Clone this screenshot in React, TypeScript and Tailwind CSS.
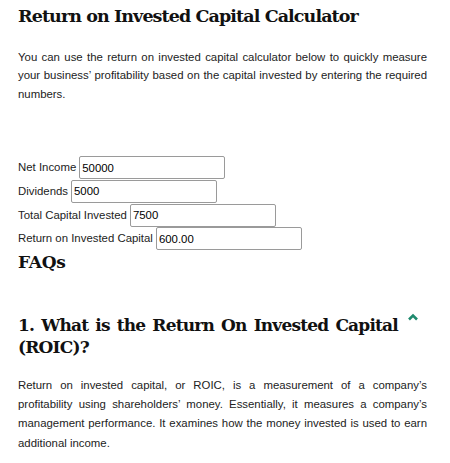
import React from "react";

const sans = { fontFamily: '"Liberation Sans", Arial, sans-serif' };
const serif = { fontFamily: '"DejaVu Serif", serif' };

function Row({ label, value }: { label: string; value: string }) {
  return (
    <div className="flex items-center h-[23.7px]">
      <span className="text-[11.4px] text-[#222]">{label}</span>
      <input
        readOnly
        value={value}
        className="ml-[3px] w-[146px] h-[23px] border border-[#9a9a9a] rounded-[2px] px-[2px] text-[11.4px] text-black bg-white outline-none"
        style={sans}
      />
    </div>
  );
}

export default function App() {
  return (
    <div className="w-[450px] h-[463px] bg-white overflow-hidden pl-[18px] pr-[23px]" style={sans}>
      <h1 className="pt-[2px] text-[17.5px] leading-[28px] font-bold text-[#111] tracking-[-0.9px]" style={serif}>
        Return on Invested Capital Calculator
      </h1>
      <p className="mt-[18px] text-[11.4px] leading-[18.3px] text-[#222] text-justify">
        You can use the return on invested capital calculator below to quickly measure your business’ profitability based on the capital invested by entering the required numbers.
      </p>
      <div className="mt-[53px] flex flex-col">
        <Row label="Net Income" value="50000" />
        <Row label="Dividends" value="5000" />
        <Row label="Total Capital Invested" value="7500" />
        <Row label="Return on Invested Capital" value="600.00" />
      </div>
      <h2 className="mt-[-1px] text-[17px] leading-[24px] font-bold text-[#111] tracking-[-0.3px]" style={serif}>
        FAQs
      </h2>
      <div className="mt-[40px] flex items-start">
        <h3 className="flex-1 text-[17px] leading-[22.5px] font-bold text-[#111] text-justify tracking-[-0.8px]" style={serif}>
          1. What is the Return On Invested Capital (ROIC)?
        </h3>
        <svg width="10" height="8" viewBox="0 0 10 8" className="ml-[10px] mr-[9px] mt-[-1px] shrink-0">
          <path d="M1 6.5 L5 2.5 L9 6.5" stroke="#1f8a6e" strokeWidth="2.6" fill="none" />
        </svg>
      </div>
      <p className="mt-[17px] text-[11.4px] leading-[19.4px] text-[#222] text-justify">
        Return on invested capital, or ROIC, is a measurement of a company’s profitability using shareholders’ money. Essentially, it measures a company’s management performance. It examines how the money invested is used to earn additional income.
      </p>
    </div>
  );
}
